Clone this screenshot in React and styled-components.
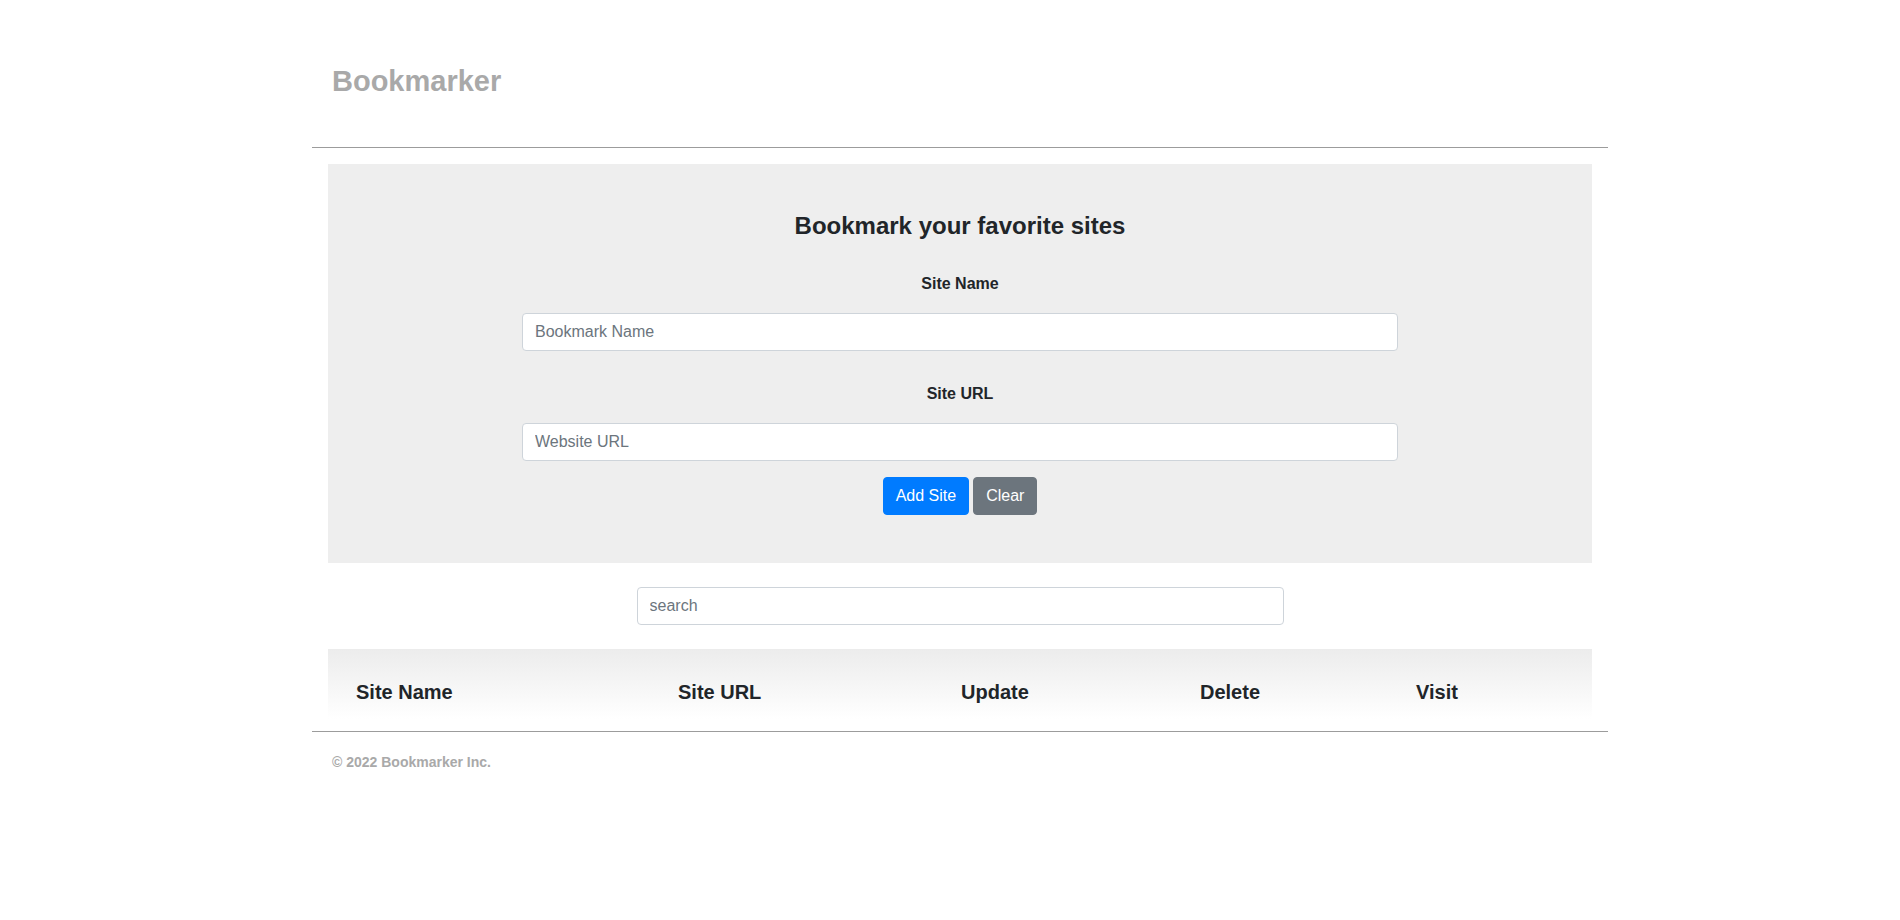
import React from "react";
import styled, { createGlobalStyle } from "styled-components";

const GlobalStyle = createGlobalStyle`
  html, body { margin: 0; padding: 0; background: #fff; }
  body {
    font-family: "Liberation Sans", Arial, Helvetica, sans-serif;
    font-size: 16px;
    line-height: 1.5;
    color: #212529;
  }
  * { box-sizing: border-box; }
`;

const Outer = styled.div`
  padding-left: 20px;
`;

const Container = styled.div`
  width: 1296px;
  margin: 0 auto;
`;

const Header = styled.header`
  padding: 64px 20px 0;
`;

const Brand = styled.h3`
  margin: 0;
  font-size: 29px;
  line-height: 34px;
  font-weight: bold;
  color: #a9a9a9;
`;

const Rule = styled.hr`
  margin: ${(p) => p.$top}px 0 0;
  border: 0;
  border-top: 1px solid #9c9c9c;
  height: 0;
`;

const Content = styled.main`
  padding: 16px 16px 0;
  display: flex;
  flex-direction: column;
  align-items: center;
`;

const Jumbotron = styled.section`
  align-self: stretch;
  background: #eeeeee;
  padding: 47px 0 48px;
  display: flex;
  flex-direction: column;
  align-items: center;
`;

const Heading = styled.h4`
  margin: 0 0 32px;
  font-size: 24px;
  line-height: 29px;
  font-weight: bold;
  color: #212529;
`;

const Field = styled.div`
  display: flex;
  flex-direction: column;
  align-items: center;
  margin-bottom: ${(p) => p.$gap}px;
`;

const Label = styled.label`
  font-weight: bold;
  font-size: 16px;
  line-height: 24px;
  margin-bottom: 17px;
  color: #212529;
`;

const Input = styled.input`
  display: block;
  width: ${(p) => p.$w}px;
  height: 38px;
  padding: 6px 12px;
  font-family: inherit;
  font-size: 16px;
  line-height: 24px;
  color: #495057;
  background: #fff;
  border: 1px solid #ced4da;
  border-radius: 4px;
  outline: none;
  &::placeholder { color: #6c757d; opacity: 1; }
`;

const Actions = styled.div`
  display: flex;
  gap: 4px;
`;

const Button = styled.button`
  height: 38px;
  padding: 6px 12px;
  font-family: inherit;
  font-size: 16px;
  line-height: 24px;
  color: #fff;
  background: ${(p) => (p.$variant === "secondary" ? "#6c757d" : "#007bff")};
  border: 1px solid ${(p) => (p.$variant === "secondary" ? "#6c757d" : "#007bff")};
  border-radius: 4px;
  cursor: pointer;
`;

const SearchWrap = styled.div`
  margin-top: 24px;
`;

const Table = styled.div`
  align-self: stretch;
  margin-top: 24px;
`;

const HeadRow = styled.div`
  display: grid;
  grid-template-columns: 322px 283px 239px 216px 204px;
  height: 70px;
  padding-top: 31px;
  background: linear-gradient(to bottom, #ececec 0%, #ffffff 100%);
`;

const HeadCell = styled.div`
  padding-left: 28px;
  font-size: 20px;
  line-height: 24px;
  font-weight: bold;
  color: #212529;
`;

const Footer = styled.footer`
  padding: 20px 20px 0;
  font-size: 14px;
  line-height: 20px;
  font-weight: bold;
  color: #a9a9a9;
`;

const columns = ["Site Name", "Site URL", "Update", "Delete", "Visit"];

export default function App() {
  return (
    <>
      <GlobalStyle />
      <Outer>
        <Container>
          <Header>
            <Brand>Bookmarker</Brand>
          </Header>
          <Rule $top={49} />
          <Content>
            <Jumbotron>
              <Heading>Bookmark your favorite sites</Heading>
              <Field $gap={31}>
                <Label htmlFor="siteName">Site Name</Label>
                <Input id="siteName" $w={876} placeholder="Bookmark Name" />
              </Field>
              <Field $gap={16}>
                <Label htmlFor="siteUrl">Site URL</Label>
                <Input id="siteUrl" $w={876} placeholder="Website URL" />
              </Field>
              <Actions>
                <Button>Add Site</Button>
                <Button $variant="secondary">Clear</Button>
              </Actions>
            </Jumbotron>
            <SearchWrap>
              <Input $w={647} placeholder="search" />
            </SearchWrap>
            <Table>
              <HeadRow>
                {columns.map((c) => (
                  <HeadCell key={c}>{c}</HeadCell>
                ))}
              </HeadRow>
            </Table>
          </Content>
          <Rule $top={12} />
          <Footer>© 2022 Bookmarker Inc.</Footer>
        </Container>
      </Outer>
    </>
  );
}
